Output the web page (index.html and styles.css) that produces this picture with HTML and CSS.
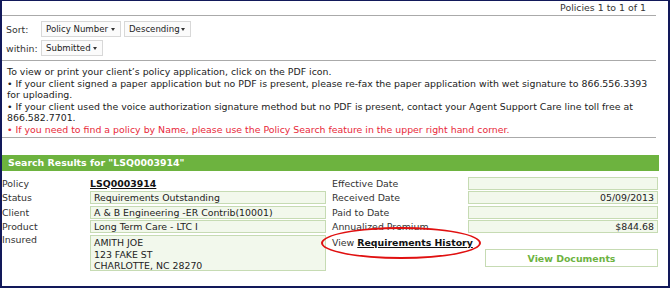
FILE: index.html
```html
<!DOCTYPE html>
<html>
<head>
<meta charset="utf-8">
<link rel="stylesheet" href="styles.css">
</head>
<body>
<div class="frame">
  <div class="pager">Policies 1 to 1 of 1</div>
  <div class="sort">
    <div class="sort-row">
      <span class="sort-label">Sort:</span>
      <span class="select w-policy">Policy Number <i class="caret"></i></span>
      <span class="select w-desc">Descending <i class="caret"></i></span>
    </div>
    <div class="sort-row">
      <span class="sort-label">within:</span>
      <span class="select w-sub">Submitted <i class="caret"></i></span>
    </div>
  </div>
  <div class="info">
    <div>To view or print your client’s policy application, click on the PDF icon.</div>
    <div>&bull; If your client signed a paper application but no PDF is present, please re-fax the paper application with wet signature to 866.556.3393 for uploading.</div>
    <div>&bull; If your client used the voice authorization signature method but no PDF is present, contact your Agent Support Care line toll free at 866.582.7701.</div>
    <div class="red">&bull; If you need to find a policy by Name, please use the Policy Search feature in the upper right hand corner.</div>
  </div>
  <div class="results-bar">Search Results for "LSQ0003914"</div>
  <div class="details">
    <div class="col-left">
      <div class="row"><span class="label">Policy</span><a class="link">LSQ0003914</a></div>
      <div class="row"><span class="label">Status</span><span class="box">Requirements Outstanding</span></div>
      <div class="row"><span class="label">Client</span><span class="box">A &amp; B Engineering -ER Contrib(10001)</span></div>
      <div class="row"><span class="label">Product</span><span class="box">Long Term Care - LTC I</span></div>
      <div class="row tall-row"><span class="label">Insured</span><span class="box tall">AMITH JOE<br>123 FAKE ST<br>CHARLOTTE, NC 28270</span></div>
    </div>
    <div class="col-right">
      <div class="row"><span class="label r">Effective Date</span><span class="box rbox"></span></div>
      <div class="row"><span class="label r">Received Date</span><span class="box rbox">05/09/2013</span></div>
      <div class="row"><span class="label r">Paid to Date</span><span class="box rbox"></span></div>
      <div class="row"><span class="label r">Annualized Premium</span><span class="box rbox">$844.68</span></div>
      <div class="row view-row"><span class="view">View <a class="link">Requirements History</a><span class="ellipse"></span></span></div>
      <div class="btn-row"><span class="button">View Documents</span></div>
    </div>
  </div>
</div>
</body>
</html>
```
FILE: styles.css
```css
html, body { margin: 0; padding: 0; background: #fff; }
.frame {
  width: 670px; height: 288px; box-sizing: border-box;
  border: 2px solid #12195a; border-top-width: 1px;
  font-family: "DejaVu Sans", Verdana, sans-serif;
  font-size: 9.4px; color: #222;
  overflow: hidden; position: relative;
}
.pager {
  height: 14px; line-height: 14px; text-align: right;
  padding-right: 10px; margin-right: 12px;
  border-bottom: 1px solid #aaa; color: #333;
}
.sort { padding: 4px 0 0 4px; height: 40px; }
.sort-row { display: flex; align-items: center; height: 18px; gap: 3px; }
.sort-row + .sort-row { margin-top: 1px; }
.sort-label { width: 32px; color: #333; }
.select {
  display: inline-flex; align-items: center; justify-content: space-between;
  height: 16px; box-sizing: border-box; border: 1px solid #d8d8d8;
  padding: 0 5px 0 4px; background: #fbfbfb; white-space: nowrap;
  font-size: 8.6px;
}
.w-policy { width: 80px; }
.w-desc { width: 67px; }
.w-sub { width: 62px; }
.caret {
  width: 0; height: 0; border-left: 2.5px solid transparent; border-right: 2.5px solid transparent;
  border-top: 3px solid #333;
}
.info {
  margin-right: 12px; border-top: 1px solid #aaa; border-bottom: 1px solid #aaa;
  padding: 5px 0 2px 5px; line-height: 11.5px;
}
.red { color: #e8283a; }
.results-bar {
  margin-top: 17px; margin-right: 9px; height: 16px; line-height: 16px;
  background: #6db33f; color: #fff; font-weight: bold; padding-left: 6px;
}
.details { display: flex; padding-top: 5px; }
.col-left { width: 324px; }
.col-right { width: 326px; padding-left: 6px; }
.row { display: flex; align-items: center; height: 14.5px; }
.label { width: 88px; color: #333; flex: none; }
.label.r { width: 136px; }
.box {
  flex: 1; height: 13px; box-sizing: border-box;
  border: 1px solid #c6dbb3; background: #f2f8ec; padding: 0 3px; line-height: 11px;
}
.rbox { text-align: right; }
.tall-row { height: 36px; align-items: flex-start; }
.tall { height: 36px; margin-top: 1px; line-height: 11.5px; padding-top: 1px; }
.link { color: #111; font-weight: bold; text-decoration: underline; }
.view-row { height: 14px; margin-top: 1px; }
.view { position: relative; color: #333; }
.ellipse {
  position: absolute; left: -11px; top: -10px; width: 156px; height: 28px;
  border: 2px solid #e01010; border-radius: 50%;
}
.btn-row { display: flex; justify-content: flex-end; }
.button {
  width: 173px; height: 18px; box-sizing: border-box; border: 1px solid #c6dbb3;
  display: flex; align-items: center; justify-content: center;
  color: #6db33f; font-weight: bold; background: #fff;
}
```
